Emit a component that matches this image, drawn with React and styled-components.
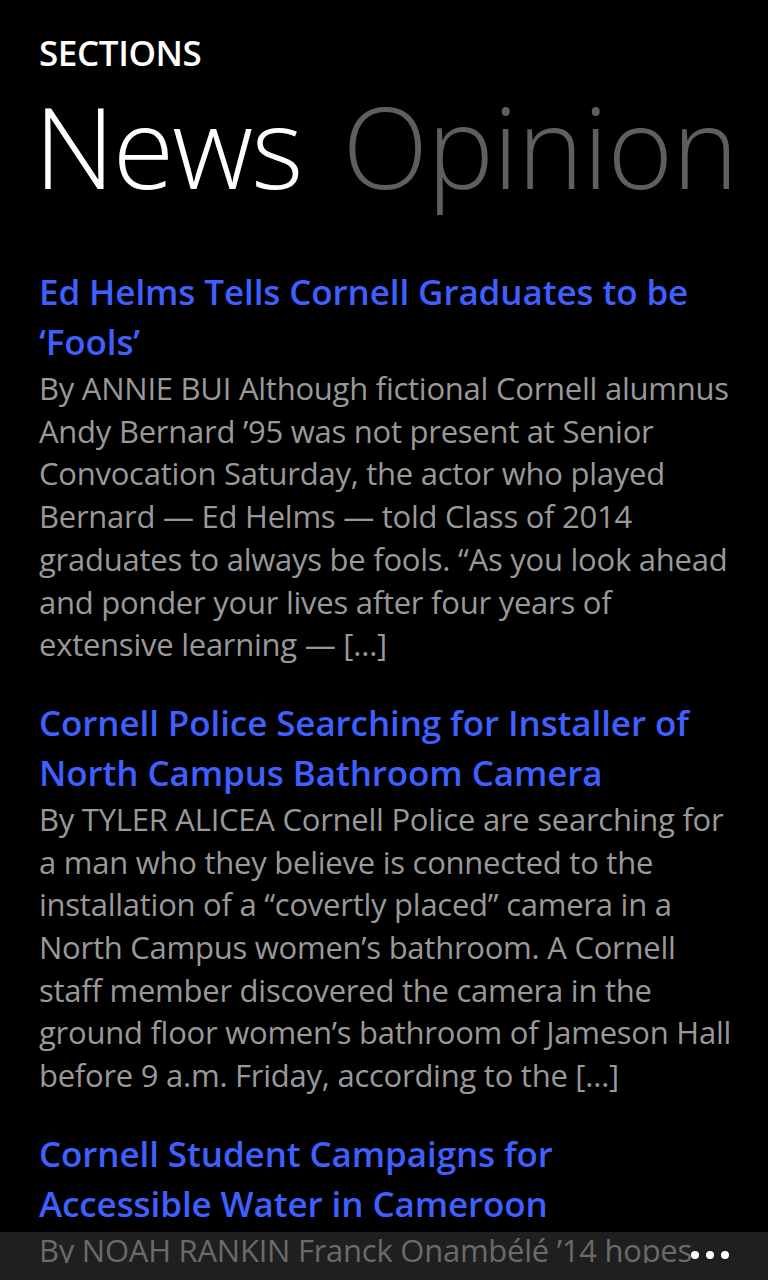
import React from "react";
import styled, { createGlobalStyle } from "styled-components";

const GlobalStyle = createGlobalStyle`
  html, body { margin: 0; padding: 0; background: #000; }
  * { box-sizing: border-box; }
`;

const Screen = styled.div`
  position: relative;
  width: 768px;
  height: 1280px;
  background: #000;
  overflow: hidden;
  font-family: "Open Sans", "Noto Sans", sans-serif;
`;

const Content = styled.div`
  height: 1263px;
  overflow: hidden;
  padding: 33px 0 0 39px;
`;

const SectionLabel = styled.div`
  color: #fff;
  font-size: 35px;
  font-weight: 600;
  line-height: 40px;
  letter-spacing: -0.4px;
`;

const PivotHeaders = styled.div`
  display: flex;
  gap: 41px;
  margin: 15px 0 0 -5px;
  white-space: nowrap;
`;

const PivotItem = styled.div`
  font-size: 112px;
  font-weight: 300;
  line-height: 115px;
  letter-spacing: ${(p) => (p.$active ? "-2px" : "-0.8px")};
  color: ${(p) => (p.$active ? "#ffffff" : "#5f5f5f")};
`;

const ArticleList = styled.div`
  display: flex;
  flex-direction: column;
  gap: 32px;
  margin-top: 64px;
`;

const Article = styled.div`
  display: flex;
  flex-direction: column;
`;

const Title = styled.div`
  color: #3f5fff;
  font-size: 35px;
  font-weight: 600;
  line-height: 50px;
  white-space: nowrap;
  letter-spacing: -0.1px;
`;

const Summary = styled.div`
  color: #999999;
  font-size: 31px;
  font-weight: 400;
  line-height: 42.7px;
  white-space: nowrap;
  letter-spacing: -0.25px;
`;

const AppBar = styled.div`
  position: absolute;
  left: 0;
  right: 0;
  bottom: 0;
  height: 48px;
  background: rgba(61, 61, 61, 0.51);
  display: flex;
  justify-content: flex-end;
  align-items: center;
  gap: 7px;
  padding: 0 39px 2px 0;
`;

const Dot = styled.span`
  width: 8px;
  height: 8px;
  border-radius: 50%;
  background: #fff;
`;

const articles = [
  {
    title: ["Ed Helms Tells Cornell Graduates to be", "\u2018Fools\u2019"],
    summary: [
      "By ANNIE BUI Although fictional Cornell alumnus",
      "Andy Bernard \u201995 was not present at Senior",
      "Convocation Saturday, the actor who played",
      "Bernard \u2014 Ed Helms \u2014 told Class of 2014",
      "graduates to always be fools. \u201cAs you look ahead",
      "and ponder your lives after four years of",
      "extensive learning \u2014 [\u2026]",
    ],
  },
  {
    title: ["Cornell Police Searching for Installer of", "North Campus Bathroom Camera"],
    summary: [
      "By TYLER ALICEA Cornell Police are searching for",
      "a man who they believe is connected to the",
      "installation of a \u201ccovertly placed\u201d camera in a",
      "North Campus women\u2019s bathroom. A Cornell",
      "staff member discovered the camera in the",
      "ground floor women\u2019s bathroom of Jameson Hall",
      "before 9 a.m. Friday, according to the [\u2026]",
    ],
  },
  {
    title: ["Cornell Student Campaigns for", "Accessible Water in Cameroon"],
    summary: [
      "By NOAH RANKIN Franck Onamb\u00e9l\u00e9 \u201914 hopes",
      "to bring clean water to villages in Cameroon.",
    ],
  },
];

const Lines = ({ lines }) =>
  lines.map((l, i) => (
    <React.Fragment key={i}>
      {l}
      {i < lines.length - 1 && <br />}
    </React.Fragment>
  ));

export default function App() {
  return (
    <>
      <GlobalStyle />
      <Screen>
        <Content>
          <SectionLabel>SECTIONS</SectionLabel>
          <PivotHeaders>
            <PivotItem $active>News</PivotItem>
            <PivotItem>Opinion</PivotItem>
          </PivotHeaders>
          <ArticleList>
            {articles.map((a, i) => (
              <Article key={i}>
                <Title>
                  <Lines lines={a.title} />
                </Title>
                <Summary>
                  <Lines lines={a.summary} />
                </Summary>
              </Article>
            ))}
          </ArticleList>
        </Content>
        <AppBar>
          <Dot />
          <Dot />
          <Dot />
        </AppBar>
      </Screen>
    </>
  );
}
